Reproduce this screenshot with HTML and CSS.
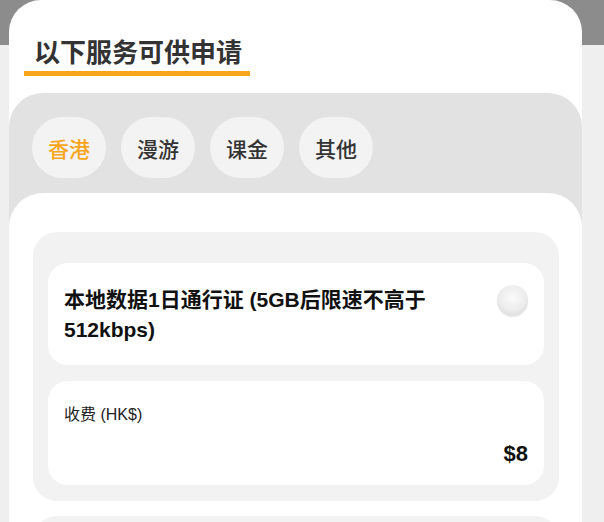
FILE: index.html
```html
<!DOCTYPE html>
<html lang="zh-CN">
<head>
<meta charset="utf-8">
<title>以下服务可供申请</title>
<link rel="stylesheet" href="styles.css">
</head>
<body>
  <main class="sheet">
    <h1 class="title">以下服务可供申请</h1>
    <section class="panel">
      <nav class="tabs">
        <button class="tab active">香港</button>
        <button class="tab">漫游</button>
        <button class="tab">课金</button>
        <button class="tab">其他</button>
      </nav>
      <div class="content">
        <div class="group">
          <div class="item option">
            <div class="option-name">本地数据1日通行证 (5GB后限速不高于 512kbps)</div>
            <span class="radio"></span>
          </div>
          <div class="item price">
            <div class="price-label">收费 (HK$)</div>
            <div class="price-value">$8</div>
          </div>
        </div>
        <div class="group group-next"></div>
      </div>
    </section>
  </main>
</body>
</html>
```
FILE: styles.css
```css
* { box-sizing: border-box; }

html, body {
  margin: 0;
  height: 100%;
  overflow: hidden;
}

body {
  font-family: "Liberation Sans", "Noto Sans CJK SC", sans-serif;
  color: #111;
  background:
    linear-gradient(#8c8c8c, #8c8c8c) left top / 12px 30px no-repeat,
    linear-gradient(#8c8c8c, #8c8c8c) left top / 100% 45px no-repeat,
    #efefef;
}

.sheet {
  margin-left: 9px;
  width: 573px;
  min-height: 600px;
  background: #fff;
  border-radius: 32px 32px 0 0;
  padding-top: 34px;
}

.title {
  display: inline-block;
  margin: 0 0 0 15px;
  padding: 0 8px 3px 10px;
  font-family: "Noto Sans CJK SC", sans-serif;
  font-size: 26px;
  line-height: 34px;
  font-weight: 700;
  color: #333;
  border-bottom: 5px solid #f8a51c;
}

.panel {
  margin-top: 17px;
  background: #e2e2e2;
  border-radius: 34px 34px 0 0;
  padding-top: 24px;
}

.tabs {
  display: flex;
  gap: 15px;
  padding: 0 23px;
}

.tab {
  width: 74px;
  height: 61px;
  border: none;
  border-radius: 31px;
  background: #f3f3f3;
  font-family: "Noto Sans CJK SC", sans-serif;
  font-size: 21px;
  font-weight: 500;
  color: #333;
  padding: 0;
}

.tab.active { color: #f8a51c; }

.content {
  margin-top: 15px;
  background: #fff;
  border-radius: 34px 34px 0 0;
  padding: 39px 23px 0 24px;
  display: flex;
  flex-direction: column;
  gap: 15px;
}

.group {
  background: #f2f2f2;
  border-radius: 24px;
  padding: 31px 15px 16px;
  display: flex;
  flex-direction: column;
  gap: 16px;
}

.group-next {
  min-height: 120px;
}

.item {
  background: #fff;
  border-radius: 20px;
}

.option {
  display: flex;
  align-items: flex-start;
  gap: 20px;
  padding: 22px 16px 20px;
}

.option-name {
  flex: 1;
  font-size: 21px;
  line-height: 30px;
  font-weight: 700;
  color: #111;
}

.radio {
  flex: none;
  width: 31px;
  height: 31px;
  border-radius: 50%;
  background: radial-gradient(circle at 50% 40%, #fafafa 0%, #ececec 55%, #cfcfcf 100%);
  box-shadow: 0 1px 1px rgba(0,0,0,0.1);
}

.price {
  padding: 22px 16px 16px;
}

.price-label {
  font-size: 16px;
  line-height: 24px;
  color: #222;
}

.price-value {
  margin-top: 12px;
  text-align: right;
  font-size: 22px;
  line-height: 30px;
  font-weight: 700;
  color: #111;
}
```
